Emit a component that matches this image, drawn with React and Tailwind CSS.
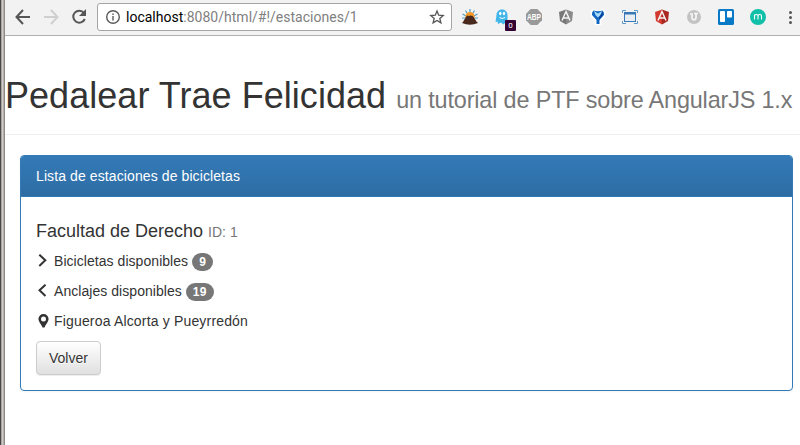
import React from "react";

function Extensions() {
  return (
    <div className="flex h-6 items-center gap-2">
      {/* Sunrise */}
      <svg className="size-6" viewBox="0 0 24 24">
        <g stroke="#4f9fc9" strokeWidth="1.200">
          <path d="M12 4V8M7.500 5.500L9 8M16.500 5.500L15 8M4.500 9L8 11M19.500 9L16 11M4 13H7M20 13H17" />
        </g>
        <circle cx="12" cy="11.500" r="4.600" fill="#f39a2b" />
        <path d="M4 18C6 16.500 7 12 9.500 10.500L11 11L12.500 10.500L14.500 11C17 12.500 17.500 16.500 20 18Q12 21.500 4 18Z" fill="#49291d" />
      </svg>
      {/* Ghost with counter */}
      <div className="relative size-6">
        <svg className="size-6" viewBox="0 0 24 24">
          <path d="M6.500 10C6.500 2.500 17.500 2.500 17.500 10V15L18.500 18L15.500 17.500L13.500 19.500L11 17.500L8 19L7.500 16.500L5.500 17Z" fill="#41b6e9" />
          <ellipse cx="10.300" cy="8.500" rx="1.200" ry="1.700" fill="#fff" />
          <ellipse cx="14" cy="8.500" rx="1.200" ry="1.700" fill="#fff" />
          <path d="M9.500 12.500Q12 14.500 15 12.500" stroke="#fff" fill="none" />
        </svg>
        <span className="absolute top-[15px] left-[15px] flex h-[11px] w-[11px] items-center justify-center rounded-[1px] bg-[#330033] font-['Roboto',sans-serif] text-[8px] leading-none text-white">0</span>
      </div>
      {/* Ad blocker */}
      <svg className="size-6" viewBox="0 0 24 24">
        <path d="M8.700 4H15.300L20 8.700V15.300L15.300 20H8.700L4 15.300V8.700Z" fill="#999" />
        <text x="12" y="15" textAnchor="middle" textLength="14" lengthAdjust="spacingAndGlyphs" fontFamily="Liberation Sans, sans-serif" fontWeight="700" fontSize="9" fill="#fff">ABP</text>
      </svg>
      <Shield left="#777" right="#8a8a8a" />
      {/* Blue tick */}
      <svg className="size-6" viewBox="0 0 24 24">
        <path d="M8 5L5.500 7L6 11L10 15V19H14V15L18 11L18.500 7L16 5L12 8Z" fill="#fff" stroke="#fff" strokeWidth="2.500" strokeLinejoin="round" />
        <path d="M7.500 5.500Q12 7 16.500 5.500Q18.500 7 18 10L13.500 15V19H10.500V15L6 10Q5.500 7 7.500 5.500Z" fill="#1266c1" />
        <path d="M8 6L12 8.500L16 6L14.500 10L12 12.500L9.500 10Z" fill="#a5dbf8" />
        <path d="M16.500 7Q17.500 9 16 11L13 14.500V12.500Z" fill="#083e92" />
      </svg>
      {/* Window capture */}
      <svg className="size-6" viewBox="0 0 24 24" fill="none">
        <path d="M4.500 8V5.500H8M16 5.500H19.500V8M19.500 16V18.500H16M8 18.500H4.500V16" stroke="#609bcc" />
        <rect x="6.500" y="7.500" width="11" height="9" fill="#e9eef3" stroke="#3979b7" />
        <path d="M6 8.500H18" stroke="#3979b7" strokeWidth="2" />
      </svg>
      <Shield left="#d33a2f" right="#aa2822" />
      {/* Circular U */}
      <svg className="size-6" viewBox="0 0 24 24">
        <circle cx="12" cy="12" r="7" fill="#c3c3c3" />
        <path d="M8 9H10V12.500C10 15.500 14 15.500 14 12.500V8.500M12 8.500H16" fill="none" stroke="#f6f6f6" strokeWidth="1.700" />
      </svg>
      {/* Board */}
      <svg className="size-6" viewBox="0 0 24 24">
        <rect x="4" y="4" width="16" height="16" rx="1.500" fill="#0879c6" />
        <rect x="6" y="6" width="5" height="11" rx=".8" fill="#fff" />
        <rect x="13" y="6" width="5" height="6.500" rx=".8" fill="#fff" />
      </svg>
      {/* Circular m */}
      <svg className="size-6" viewBox="0 0 24 24">
        <circle cx="12" cy="12" r="8" fill="#12bfa9" />
        <path d="M8.500 14.500V9.500M8.500 11C8.500 9 12 9 12 11V14.500M12 11C12 9 15.500 9 15.500 11V14.500" fill="none" stroke="#fff" strokeWidth="1.100" />
      </svg>
      <svg className="size-6" viewBox="0 0 24 24" fill="#555">
        <circle cx="12.500" cy="7.500" r="1.500" />
        <circle cx="12.500" cy="12.500" r="1.500" />
        <circle cx="12.500" cy="17.500" r="1.500" />
      </svg>
    </div>
  );
}

function Shield({ left, right }) {
  return (
    <svg className="size-6" viewBox="0 0 24 24">
      <path d="M12 4.500L5 7L6 16L12 19.500Z" fill={left} />
      <path d="M12 4.500L19 7L18 16L12 19.500Z" fill={right} />
      <path d="M8 15.500L12 6.500L16 15.500M9.500 13H14.500" stroke="#f3f3f3" strokeWidth="1.500" fill="none" />
    </svg>
  );
}

function Toolbar() {
  return (
    <header className="flex h-9 items-start border-b border-[#b0b0b0] bg-[#f2f2f2]">
      <div className="flex h-[34px] w-[92px] items-center gap-1 pl-[6px] text-[#555]">
        <svg className="size-6" viewBox="0 0 24 24" fill="none" stroke="#555" strokeWidth="2">
          <path d="M19 12H6M12 5L5.500 12L12 19" />
        </svg>
        <svg className="size-6" viewBox="0 0 24 24" fill="none" stroke="#cfcfcf" strokeWidth="2">
          <path d="M5 12H18M12 5L18.500 12L12 19" />
        </svg>
        <svg className="size-6" viewBox="0 0 24 24" fill="none">
          <path d="M17 8A6 6 0 1 0 17.800 14" stroke="#555" strokeWidth="2" />
          <path d="M19 4V11H12Z" fill="#555" />
        </svg>
      </div>
      <div className="mt-[3px] flex h-7 w-[355px] items-center rounded-[3px] border border-[#a5a5a5] bg-white pr-[6px] pl-[7px]">
        <svg className="size-4" viewBox="0 0 16 16" fill="none" stroke="#5a5a5a" strokeWidth="1.400">
          <circle cx="8" cy="8" r="6.300" />
          <path d="M8 7V11.500M8 4.500V6" />
        </svg>
        <div className="ml-[5px] flex-1 font-['Roboto',sans-serif] text-[14px] tracking-[0.010px] whitespace-nowrap text-[#808080]">
          <span className="text-black">localhost</span>:8080/html/#!/estaciones/1
        </div>
        <svg className="size-4" viewBox="0 0 16 16" fill="none" stroke="#555" strokeWidth="1.300">
          <path d="M8 2L9.700 6.200L14.200 6.500L10.800 9.400L11.900 13.800L8 11.400L4.100 13.800L5.200 9.400L1.800 6.500L6.300 6.200Z" />
        </svg>
      </div>
      <div className="mt-[5px] ml-[6px] w-[342px] overflow-hidden pb-1">
        <div className="w-[344px]"><Extensions /></div>
      </div>
    </header>
  );
}

function Detail({ icon, children }) {
  return (
    <p className="mb-[10px] flex h-5 items-center whitespace-nowrap">
      <svg className="mr-1 size-[14px] shrink-0" viewBox="0 0 14 14" fill="none" stroke="#333" strokeWidth="2">{icon}</svg>
      {children}
    </p>
  );
}

function Badge({ children }) {
  return <span className="mt-[2px] ml-1 inline-flex h-[18px] items-center rounded-[10px] bg-[#777] px-[7px] pb-px text-[12px] leading-none font-bold tracking-[0.330px] text-white">{children}</span>;
}

export default function App() {
  return (
    <div className="flex h-[445px] w-[800px] overflow-hidden bg-white font-['Liberation_Sans',Arial,sans-serif] text-[14px] leading-5 text-[#333]">
      <div className="flex w-[5px] shrink-0 bg-white">
        <div className="w-px bg-[#494747]" />
        <div className="w-px bg-[#aaa5a2]" />
        <div className="w-px bg-[#d1ccc8]" />
        <div className="w-px bg-[#b5afab]" />
        <div className="w-px bg-[#8e8a88]" />
      </div>
      <div className="w-[795px] shrink-0">
        <Toolbar />
        <main>
          <div className="mt-10 mb-5 border-b border-[#eee] pb-[18px]">
            <h1 className="h-10 text-[36px] leading-10 font-medium tracking-[0.040px] whitespace-nowrap">
              Pedalear Trae Felicidad <small className="text-[23.400px] leading-none font-normal tracking-[-0.150px] text-[#777]">un tutorial de PTF sobre AngularJS 1.x</small>
            </h1>
          </div>
          <section className="mr-[7px] ml-[15px] rounded-[4px] border border-[#337ab7] shadow-[0_1px_2px_rgba(0,0,0,0.05)]">
            <div className="h-[41px] rounded-t-[3px] border-b border-[#337ab7] bg-linear-to-b from-[#337ab7] to-[#2e6da4] px-[15px] py-[10px] tracking-[0.100px] text-white">Lista de estaciones de bicicletas</div>
            <div className="px-[15px] pt-[25px] pb-[15px]">
              <h4 className="mb-[10px] h-[19px] text-[18px] leading-[19px]">
                Facultad de Derecho <small className="text-[14px] leading-none text-[#777]">ID: 1</small>
              </h4>
              <Detail icon={<path d="M3.300 0.700L9.300 6.300L3.300 11.900" />}><span className="tracking-[0.050px]">Bicicletas disponibles</span><Badge>9</Badge></Detail>
              <Detail icon={<path d="M9.500 0.700L3.500 6.300L9.500 11.900" />}><span className="tracking-[0.050px]">Anclajes disponibles</span><Badge>19</Badge></Detail>
              <Detail icon={<path fill="#333" stroke="none" fillRule="evenodd" d="M7.500 0A5.100 5.100 0 0 0 2.400 5.100C2.400 8 5.500 10.500 6.500 13.500H8.500C9.500 10.500 12.600 8 12.600 5.100A5.100 5.100 0 0 0 7.500 0ZM7.500 2.600A2.500 2.500 0 1 1 7.500 7.600A2.500 2.500 0 0 1 7.500 2.600Z" />}><span className="tracking-[0.170px]">Figueroa Alcorta y Pueyrredón</span></Detail>
              <button className="block h-[34px] rounded-[4px] border border-[#ccc] bg-linear-to-b from-white to-[#e0e0e0] px-3 py-[6px] shadow-[inset_0_1px_0_rgba(255,255,255,0.15),0_1px_1px_rgba(0,0,0,0.075)] [text-shadow:0_1px_0_#fff]">Volver</button>
            </div>
          </section>
        </main>
      </div>
    </div>
  );
}
